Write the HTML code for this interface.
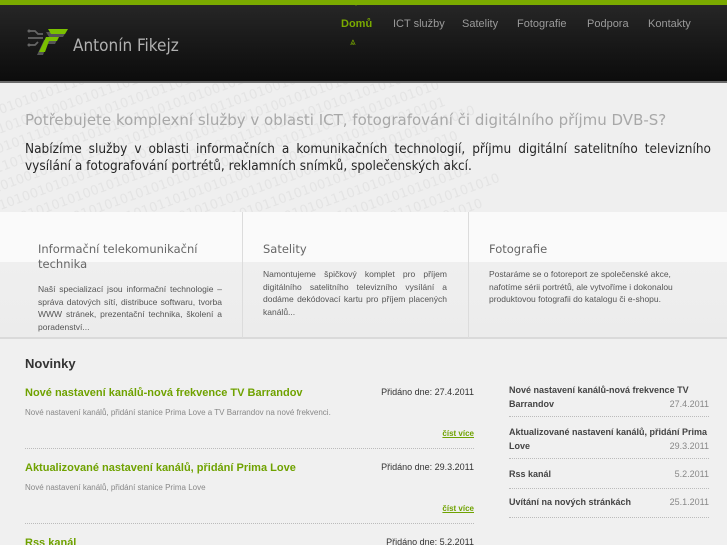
<!DOCTYPE html>
<html><head><meta charset="utf-8"><style>
*{margin:0;padding:0;box-sizing:border-box}
html,body{width:727px;height:545px;overflow:hidden}
body{background:#f0f0f0;font-family:"DejaVu Sans","Liberation Sans",sans-serif;position:relative}
.top{position:absolute;left:0;top:0;width:727px;height:5px;background:#7aaa00}
.hdr{position:absolute;left:0;top:5px;width:727px;height:76px;background:linear-gradient(#262626,#161616 60%,#0c0c0c)}
.hdr:after{content:"";position:absolute;left:0;bottom:-2px;width:100%;height:2px;background:#6a6a6a}
.logo{position:absolute;left:73px;top:31px;color:#b0b0b0;font-size:17px;font-family:"DejaVu Sans Condensed","DejaVu Sans",sans-serif}
.nav{position:absolute;top:13px;font-size:11px;color:#9a9a9a;font-family:"Liberation Sans",sans-serif}
.band{position:absolute;left:0;top:83px;width:727px;height:129px;background:#efefef;overflow:hidden}
.h1{position:absolute;left:25px;top:111px;font-size:15px;color:#a8a8a8;white-space:nowrap}
.p1{position:absolute;left:25px;top:141px;width:686px;font-size:13.5px;line-height:17px;color:#262626;text-align:justify;font-family:"DejaVu Sans Condensed","DejaVu Sans",sans-serif}
.feat{position:absolute;left:0;top:212px;width:727px;height:127px;background:linear-gradient(#fafafa 0,#fafafa 40%,#efefef 40%,#ececec 100%);border-bottom:2px solid #dadada}
.col{position:absolute;top:0;height:126px;border-right:1px solid #dcdcdc}
.col h3{position:absolute;font-weight:normal;font-size:11.5px;color:#666;line-height:15px}
.col p{position:absolute;font-size:8.5px;line-height:12.5px;color:#555;text-align:justify;font-family:"Liberation Sans",sans-serif}
.nov{position:absolute;left:25px;top:356px;font-size:13px;font-weight:bold;color:#333;font-family:"Liberation Sans",sans-serif}
.it{position:absolute;left:25px;width:449px;font-family:"Liberation Sans",sans-serif;border-bottom:1px dotted #bbb;height:62px}
.it b{position:absolute;left:0;top:0;color:#6fa200;font-size:11px}
.it .d{position:absolute;right:0;top:0;font-size:9px;color:#333}
.it .t{position:absolute;left:0;top:21px;font-size:8px;color:#888}
.it u{position:absolute;right:0;top:42px;font-size:8px;color:#6fa200;font-weight:bold}
.si{position:absolute;left:509px;width:200px;font-family:"Liberation Sans",sans-serif;border-bottom:1px dotted #bbb;font-size:9px;font-weight:bold;color:#444;line-height:14px}
.si span{position:absolute;right:0;font-weight:normal;color:#888}
</style></head><body>
<div class="top"></div>
<div class="hdr">
<svg style="position:absolute;left:26px;top:23px" width="44" height="28" viewBox="0 0 44 28">
<path d="M3 3h6l3 3h5M2 10h15M3 17h6l3-3" stroke="#666" stroke-width="1.8" fill="none"/>
<circle cx="3" cy="3" r="1.5" fill="#666"/><circle cx="3" cy="17" r="1.5" fill="#666"/>
<path d="M22 3h20l-3 5H25zM20 11h13l-2 4H23l-4 11h-6z" fill="#555" transform="translate(-2,1)"/>
<path d="M22 1h20l-3 5H25zM20 9h13l-2 4H23l-4 11h-6z" fill="#7ac000"/>
</svg>
<div class="logo">Antonín Fikejz</div>
<div class="nav" style="left:341px;color:#7aaa00;font-weight:bold">Domů</div>
<div style="position:absolute;left:353px;top:-4px;width:0;height:0;border-left:3px solid transparent;border-right:3px solid transparent;border-top:5px solid #7aaa00"></div>
<div style="position:absolute;left:350px;top:32px;color:#7aaa00;font-size:10px">⩓</div>
<div class="nav" style="left:393px">ICT služby</div>
<div class="nav" style="left:462px">Satelity</div>
<div class="nav" style="left:517px">Fotografie</div>
<div class="nav" style="left:587px">Podpora</div>
<div class="nav" style="left:648px">Kontakty</div>
</div>
<div class="band">
<svg width="727" height="129" style="position:absolute;left:0;top:0"><g fill="#e4e4e4" font-size="13" font-family="DejaVu Sans" transform="rotate(-20 360 60)">
<text x="-100" y="-90">0101010101101010010101011101010101010101011010100101010101101010101010</text>
<text x="-100" y="-72">1110101010101101010101001010111010101010101101010010101011010101010</text>
<text x="-100" y="-54">0101101010010101011101010101010101011010100101010111010101010101010</text>
<text x="-100" y="-36">1010101001010110101010101010101101010101001011101010101010101010101</text>
<text x="-100" y="-18">0101010101101010010101011101010101010101011010100101010101101010101010</text>
<text x="-100" y="0">0101010101101010010101011101010101010101011010100101010101101010101010</text>
<text x="-100" y="18">1110101010101101010101001010111010101010101101010010101011010101010</text>
<text x="-100" y="36">0101101010010101011101010101010101011010100101010111010101010101010</text>
<text x="-100" y="54">1010101001010110101010101010101101010101001011101010101010101010101</text>
<text x="-100" y="72">0101010101101010010101011101010101010101011010100101010101101010101010</text>
<text x="-100" y="90">1110101010101101010101001010111010101010101101010010101011010101010</text>
<text x="-100" y="108">0101101010010101011101010101010101011010100101010111010101010101010</text>
<text x="-100" y="126">1010101001010110101010101010101101010101001011101010101010101010101</text>
<text x="-100" y="144">0101010101101010010101011101010101010101011010100101010101101010101010</text>
<text x="-100" y="162">1110101010101101010101001010111010101010101101010010101011010101010</text>
<text x="-100" y="180">0101101010010101011101010101010101011010100101010111010101010101010</text>
<text x="-100" y="198">1010101001010110101010101010101101010101001011101010101010101010101</text>
<text x="-100" y="216">0101010101101010010101011101010101010101011010100101010101101010101010</text>
<text x="-100" y="234">1110101010101101010101001010111010101010101101010010101011010101010</text>
</g></svg>
</div>
<div class="h1">Potřebujete komplexní služby v oblasti ICT, fotografování či digitálního příjmu DVB-S?</div>
<div class="p1">Nabízíme služby v oblasti informačních a komunikačních technologií, příjmu digitální satelitního televizního vysílání a fotografování portrétů, reklamních snímků, společenských akcí.</div>
<div class="feat">
<div class="col" style="left:0;width:243px"><h3 style="left:38px;top:30px;width:170px">Informační telekomunikační technika</h3><p style="left:38px;top:71px;width:184px">Naší specializací jsou informační technologie – správa datových sítí, distribuce softwaru, tvorba WWW stránek, prezentační technika, školení a poradenství...</p></div>
<div class="col" style="left:243px;width:226px"><h3 style="left:20px;top:30px">Satelity</h3><p style="left:20px;top:56px;width:184px">Namontujeme špičkový komplet pro příjem digitálního satelitního televizního vysílání a dodáme dekódovací kartu pro příjem placených kanálů...</p></div>
<div class="col" style="left:469px;width:258px;border:none"><h3 style="left:20px;top:30px">Fotografie</h3><p style="left:20px;top:56px;width:188px;text-align:left">Postaráme se o fotoreport ze společenské akce, nafotíme sérii portrétů, ale vytvoříme i dokonalou produktovou fotografii do katalogu či e-shopu.</p></div>
</div>
<div class="nov">Novinky</div>
<div class="it" style="top:387px"><b>Nové nastavení kanálů-nová frekvence TV Barrandov</b><span class="d">Přidáno dne: 27.4.2011</span><span class="t">Nové nastavení kanálů, přidání stanice Prima Love a TV Barrandov na nové frekvenci.</span><u>číst více</u></div>
<div class="it" style="top:462px"><b>Aktualizované nastavení kanálů, přidání Prima Love</b><span class="d">Přidáno dne: 29.3.2011</span><span class="t">Nové nastavení kanálů, přidání stanice Prima Love</span><u>číst více</u></div>
<div class="it" style="top:537px;border:none"><b>Rss kanál</b><span class="d">Přidáno dne: 5.2.2011</span></div>
<div class="si" style="top:383px;height:34px">Nové nastavení kanálů-nová frekvence TV<br>Barrandov<span style="top:14px">27.4.2011</span></div>
<div class="si" style="top:425px;height:34px">Aktualizované nastavení kanálů, přidání Prima<br>Love<span style="top:14px">29.3.2011</span></div>
<div class="si" style="top:467px;height:22px">Rss kanál<span style="top:0">5.2.2011</span></div>
<div class="si" style="top:495px;height:23px">Uvítání na nových stránkách<span style="top:0">25.1.2011</span></div>
</body></html>
